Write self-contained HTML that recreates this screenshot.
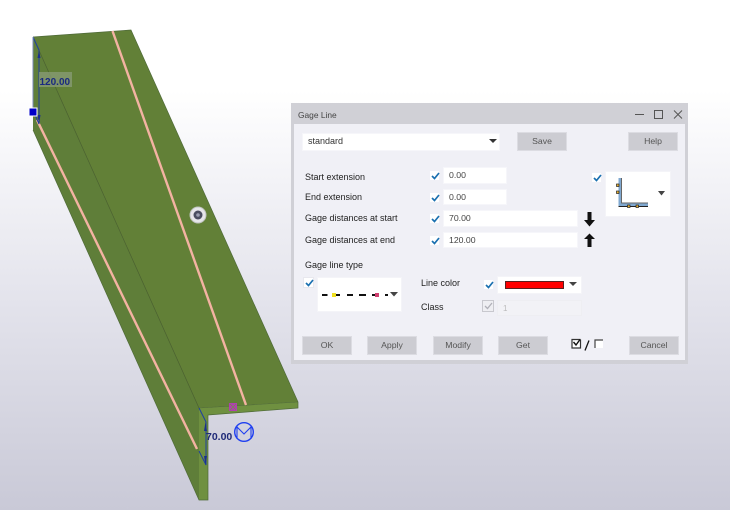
<!DOCTYPE html>
<html><head><meta charset="utf-8"><style>
html,body{margin:0;padding:0}
body{width:730px;height:510px;overflow:hidden;position:relative;background:#fff;font-family:"Liberation Sans",sans-serif}
#w{position:absolute;left:0;top:0;width:730px;height:510px;background:linear-gradient(180deg,#fff 0,#fff 90px,#e6e6ee 280px,#c9c9d7 510px);filter:blur(.35px)}
.d,.d div{position:absolute;box-sizing:border-box}
.t{font-size:9px;color:#222;line-height:12px;white-space:nowrap}
.i{background:#fff;border:1px solid #f6f6fa;font-size:8.7px;color:#444;line-height:15px;padding-left:5px}
.b{background:#ccccd2;border:1px solid #dcdce2;color:#555;font-size:8.7px;text-align:center;line-height:17px;width:50px;height:19px;top:336px}
.c{width:11px;height:11px;background:#fff;border:1px solid #e6e6ee}
.c svg{position:absolute;left:1px;top:0}
svg{display:block}
</style></head><body><div id="w">
<svg width="730" height="510" style="position:absolute;left:0;top:0">
<polygon points="33,37 131,30 298,402 199,408" fill="#628037"/>
<polygon points="33,37 199,408 199,500 33,130" fill="#5f7e39"/>
<polygon points="199,408 298,402 298,408 208,415 208,500 199,500" fill="#6f9040"/>
<polyline points="33,37 131,30 298,402 298,408 208,415 208,500 199,500 33,130" fill="none" stroke="#4f6a38" stroke-width=".7"/>
<line x1="33" y1="37" x2="199" y2="408" stroke="#4a6030" stroke-width=".7"/>
<line x1="199" y1="408" x2="298" y2="402" stroke="#4f6a38" stroke-width=".6"/>
<line x1="112.500" y1="31" x2="246" y2="405" stroke="#f3b3a2" stroke-width="2.400"/>
<line x1="37" y1="120" x2="197" y2="449" stroke="#f3b3a2" stroke-width="2.400"/>
<polyline points="33,37 39,50 39,124 33,110" fill="none" stroke="#1f3fa0" stroke-width="1"/>
<line x1="33" y1="37" x2="33" y2="110" stroke="#7a8ab8" stroke-width="1"/>
<polygon points="39,50 37.500,58 40.500,58" fill="#1b2f90"/>
<polygon points="39,124 37.500,115 40.500,115" fill="#1b2f90"/>
<rect x="39" y="72" width="33" height="15" fill="#8a9c78" opacity=".75"/>
<text x="39.500" y="85" font-family="Liberation Sans" font-weight="bold" font-size="10" fill="#1a2a80">120.00</text>
<rect x="29" y="108" width="8" height="8" fill="#0000c8" stroke="#fff" stroke-width="1"/>
<polyline points="199,408 206,422 206,465 199,451" fill="none" stroke="#1f3fa0" stroke-width="1"/>
<polygon points="205.500,422 204,431 207,431" fill="#1b2f90"/>
<polygon points="205.500,465 204,456 207,456" fill="#1b2f90"/>
<text x="206" y="440" font-family="Liberation Sans" font-weight="bold" font-size="10.500" fill="#1f2a78">70.00</text>
<circle cx="244" cy="432" r="9.300" fill="none" stroke="#2040f0" stroke-width="1.400"/>
<polyline points="237,439 237,427 244,434 251,427 251,439" fill="none" stroke="#2040f0" stroke-width="1.100"/>
<rect x="229" y="403" width="8" height="8" fill="#b040b0"/>
<path d="M230,404l6,6M236,404l-6,6" stroke="#7a8a50" stroke-width=".8"/>
<circle cx="198" cy="215" r="8" fill="#e6e6ea" stroke="#c0c4c0"/>
<circle cx="198" cy="215" r="4.500" fill="#4a4e60"/>
<circle cx="198" cy="215" r="1.800" fill="#9a9eb0"/>
</svg>

<div class="d" style="left:291px;top:103px;width:397px;height:261px;background:#d0d0d6"></div>
<div class="d" style="left:294px;top:124px;width:391px;height:236px;background:#f0f0f6"></div>
<div class="d t" style="left:298px;top:109px;color:#444;font-size:8.400px">Gage Line</div>
<svg style="position:absolute;left:635px;top:108px" width="50" height="13">
<path d="M0,6.500H9" stroke="#555" stroke-width="1"/>
<rect x="19.500" y="2.500" width="8" height="8" fill="none" stroke="#555"/>
<path d="M39,2.500l8,8M47,2.500l-8,8" stroke="#555" stroke-width="1"/>
</svg>

<div class="d i" style="left:302px;top:133px;width:198px;height:18px;color:#333;font-size:9px">standard</div>
<svg style="position:absolute;left:489px;top:139px" width="9" height="5"><path d="M0,0H8L4,4Z" fill="#333"/></svg>
<div class="d b" style="left:517px;top:132px">Save</div>
<div class="d b" style="left:628px;top:132px">Help</div>

<div class="d t" style="left:305px;top:170.500px">Start extension</div>
<div class="d t" style="left:305px;top:191px">End extension</div>
<div class="d t" style="left:305px;top:212px">Gage distances at start</div>
<div class="d t" style="left:305px;top:234px">Gage distances at end</div>

<div class="d c" style="left:429px;top:170px;border-color:#f0f0f6"><svg width="9" height="9"><path d="M1,5L3.500,7.500L8,2" fill="none" stroke="#1a70b0" stroke-width="1.700"/></svg></div>
<div class="d c" style="left:429px;top:192px;border-color:#f0f0f6"><svg width="9" height="9"><path d="M1,5L3.500,7.500L8,2" fill="none" stroke="#1a70b0" stroke-width="1.700"/></svg></div>
<div class="d c" style="left:429px;top:213px;border-color:#f0f0f6"><svg width="9" height="9"><path d="M1,5L3.500,7.500L8,2" fill="none" stroke="#1a70b0" stroke-width="1.700"/></svg></div>
<div class="d c" style="left:429px;top:235px;border-color:#f0f0f6"><svg width="9" height="9"><path d="M1,5L3.500,7.500L8,2" fill="none" stroke="#1a70b0" stroke-width="1.700"/></svg></div>

<div class="d i" style="left:443px;top:167px;width:64px;height:17px">0.00</div>
<div class="d i" style="left:443px;top:189px;width:64px;height:16px">0.00</div>
<div class="d i" style="left:443px;top:210px;width:135px;height:17px">70.00</div>
<div class="d i" style="left:443px;top:232px;width:135px;height:16px">120.00</div>

<svg style="position:absolute;left:583px;top:211px" width="13" height="38">
<path d="M4.500,1H8.500V9H12L6.500,15.500L1,9H4.500Z" fill="#111"/>
<path d="M4.500,36H8.500V28H12L6.500,22.500L1,28H4.500Z" fill="#111"/>
</svg>

<div class="d c" style="left:591px;top:172px;border-color:#f0f0f6"><svg width="9" height="9"><path d="M1,5L3.500,7.500L8,2" fill="none" stroke="#1a70b0" stroke-width="1.700"/></svg></div>
<div class="d" style="left:605px;top:171px;width:66px;height:46px;background:#fff;border:1px solid #f4f4f8"></div>
<svg style="position:absolute;left:605px;top:171px" width="66" height="46">
<path d="M13.500,7H17V32H43V35H13.500Z" fill="#7fa8d0"/>
<path d="M16.500,7V32H43" fill="none" stroke="#666" stroke-width="1"/>
<path d="M13.500,35.500H43" stroke="#222" stroke-width="1"/>
<rect x="11.500" y="13" width="2.500" height="2.500" fill="#e8b030" stroke="#222" stroke-width=".7"/>
<rect x="11.500" y="20" width="2.500" height="2.500" fill="#e8b030" stroke="#222" stroke-width=".7"/>
<rect x="22.500" y="34" width="2.500" height="2.500" fill="#e8b030" stroke="#222" stroke-width=".7"/>
<rect x="31" y="34" width="2.500" height="2.500" fill="#e8b030" stroke="#222" stroke-width=".7"/>
<path d="M53,20H60L56.500,24.500Z" fill="#444"/>
</svg>

<div class="d t" style="left:305px;top:259px">Gage line type</div>
<div class="d c" style="left:303px;top:277px;border-color:#e8e8ee"><svg width="9" height="9"><path d="M1,5L3.500,7.500L8,2" fill="none" stroke="#1a70b0" stroke-width="1.700"/></svg></div>
<div class="d" style="left:317px;top:277px;width:85px;height:35px;background:#fff;border:1px solid #f4f4f8"></div>
<svg style="position:absolute;left:317px;top:277px" width="85" height="35">
<path d="M5,18H10.500M19,18H23M30,18H36M42,18H49M55,18H59M68,18H71" stroke="#111" stroke-width="2"/>
<rect x="15" y="16" width="4" height="4" fill="#f0e020"/>
<rect x="58" y="16" width="4" height="4" fill="#d04070"/>
<path d="M73,15H81L77,19.500Z" fill="#444"/>
</svg>

<div class="d t" style="left:421px;top:277px">Line color</div>
<div class="d t" style="left:421px;top:301px">Class</div>
<div class="d c" style="left:483px;top:279px;border-color:#f0f0f6"><svg width="9" height="9"><path d="M1,5L3.500,7.500L8,2" fill="none" stroke="#1a70b0" stroke-width="1.700"/></svg></div>
<div class="d" style="left:497px;top:276px;width:85px;height:18px;background:#fff;border:1px solid #f4f4f8"></div>
<div class="d" style="left:505px;top:281px;width:59px;height:8px;background:#ff0000;border:1px solid #5a2020"></div>
<svg style="position:absolute;left:569px;top:282px" width="9" height="5"><path d="M0,0H8L4,4Z" fill="#444"/></svg>
<div class="d c" style="left:482px;top:300px;width:12px;height:12px;background:#eeeef2;border-color:#c8c8ce"><svg width="9" height="9"><path d="M1,5L3.500,7.500L8,2" fill="none" stroke="#b0b0b8" stroke-width="1.300"/></svg></div>
<div class="d i" style="left:497px;top:300px;width:85px;height:16px;background:#f2f2f6;border-color:#eeeef2;color:#bbb;font-size:8px">1</div>

<div class="d b" style="left:302px">OK</div>
<div class="d b" style="left:367px">Apply</div>
<div class="d b" style="left:433px">Modify</div>
<div class="d b" style="left:498px">Get</div>
<div class="d b" style="left:629px">Cancel</div>

<svg style="position:absolute;left:570px;top:338px" width="36" height="14">
<rect x="2" y="1" width="8" height="9" fill="#fff"/>
<path d="M10.500,1.500H2V10H10.500V1.500" fill="none" stroke="#333" stroke-width="1.200"/>
<path d="M3.500,4L6,7L10,1.500" fill="none" stroke="#111" stroke-width="1.400"/>
<path d="M15,12.500L19,2.500" stroke="#111" stroke-width="1.300"/>
<rect x="25" y="2" width="8" height="8" fill="#fff"/>
<path d="M25,10V2H33" fill="none" stroke="#444" stroke-width="1.200"/>
</svg>
</div></body></html>
